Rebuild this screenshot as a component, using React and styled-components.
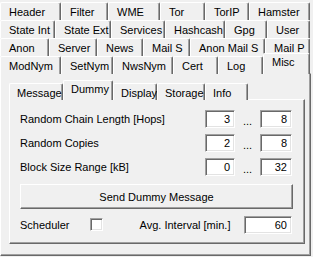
import React from "react";
import styled, { createGlobalStyle } from "styled-components";

const GlobalStyle = createGlobalStyle`
    html, body {
        margin: 0;
        padding: 0;
        background: #f0f0f0;
    }
    body {
        font-family: "Liberation Sans", Arial, sans-serif;
        font-size: 11px;
        color: #000;
    }
`;

const Window = styled.div`
    width: 313px;
    height: 257px;
    background: #f0f0f0;
    padding-top: 2px;
    box-sizing: border-box;
    overflow: hidden;
`;

const TabStrip = styled.div`
    display: flex;
    flex-direction: column;
    width: 310px;
`;

const TabRow = styled.div`
    display: flex;
    height: 18px;
    align-items: flex-end;
    margin-bottom: ${({ $last }) => ($last ? "-1px" : "0")};
`;

const Tab = styled.div`
    position: relative;
    box-sizing: border-box;
    width: ${({ $w }) => $w}px;
    height: ${({ $active, $h = 18 }) => ($active ? $h + 3 : $h)}px;
    margin-top: ${({ $active }) => ($active ? "-2px" : "0")};
    padding-left: ${({ $pad }) => $pad || 8}px;
    padding-top: ${({ $active }) => ($active ? "2px" : "3px")};
    border-top: 1px solid #fff;
    border-left: 1px solid #fff;
    border-right: 1px solid #696969;
    border-radius: 2px 2px 0 0;
    box-shadow: inset -1px 0 0 #a0a0a0;
    background: #f0f0f0;
    white-space: nowrap;
    z-index: ${({ $active }) => ($active ? 2 : 0)};
`;

const Panel = styled.div`
    box-sizing: border-box;
    width: 311px;
    height: 183px;
    border-top: 1px solid #fff;
    border-left: 1px solid #fff;
    border-right: 1px solid #696969;
    border-bottom: 1px solid #696969;
    box-shadow: inset -1px -1px 0 #a0a0a0;
    padding: 6px 0 0 8px;
`;

const InnerStrip = styled.div`
    display: flex;
    align-items: flex-end;
    height: 20px;
    margin-bottom: -1px;
`;

const InnerPanel = styled(Panel)`
    width: 296px;
    height: 145px;
    padding: 10px 12px 0 10px;
`;

const Grid = styled.div`
    display: grid;
    grid-template-columns: 185px 30px 25px 32px;
    grid-auto-rows: 18px;
    row-gap: 6px;
    align-items: center;
`;

const Label = styled.span`
    white-space: nowrap;
`;

const Dots = styled.span`
    text-align: center;
    padding-top: 3px;
`;

const Field = styled.div`
    box-sizing: border-box;
    height: 18px;
    width: ${({ $w }) => ($w ? `${$w}px` : "auto")};
    background: #fff;
    border-top: 1px solid #a0a0a0;
    border-left: 1px solid #a0a0a0;
    border-right: 1px solid #fff;
    border-bottom: 1px solid #fff;
    box-shadow: inset 1px 1px 0 #696969, inset -1px -1px 0 #e3e3e3;
    text-align: right;
    padding: 2px 4px 0 0;
`;

const Button = styled.div`
    box-sizing: border-box;
    margin-top: 8px;
    width: 273px;
    height: 25px;
    display: flex;
    align-items: center;
    justify-content: center;
    border-top: 1px solid #fff;
    border-left: 1px solid #fff;
    border-right: 1px solid #696969;
    border-bottom: 1px solid #696969;
    box-shadow: inset -1px -1px 0 #a0a0a0;
`;

const SchedRow = styled.div`
    display: flex;
    align-items: center;
    height: 19px;
    margin-top: 6px;
`;

const Check = styled.div`
    box-sizing: border-box;
    width: 13px;
    height: 13px;
    margin-left: 20px;
    margin-right: 37px;
    background: #fff;
    border-top: 1px solid #a0a0a0;
    border-left: 1px solid #a0a0a0;
    border-right: 1px solid #fff;
    border-bottom: 1px solid #fff;
    box-shadow: inset 1px 1px 0 #696969, inset -1px -1px 0 #e3e3e3;
`;

const Spacer = styled.div`
    flex: 1;
`;

const rows = [
    [["Header", 61], ["Filter", 47], ["WME", 52], ["Tor", 45], ["TorIP", 44], ["Hamster", 61]],
    [["State Int", 55], ["State Ext", 56], ["Services", 54], ["Hashcash", 60], ["Gpg", 42], ["User", 43]],
    [["Anon", 49], ["Server", 48], ["News", 46], ["Mail S", 47], ["Anon Mail S", 75], ["Mail P", 45]],
    [["ModNym", 61], ["SetNym", 52], ["NwsNym", 60], ["Cert", 45], ["Log", 45], ["Misc", 47]],
];

const innerTabs = [["Message", 54], ["Dummy", 50], ["Display", 44], ["Storage", 48], ["Info", 43]];

const ranges = [
    ["Random Chain Length [Hops]", "3", "8"],
    ["Random Copies", "2", "8"],
    ["Block Size Range [kB]", "0", "32"],
];

const App = () => (
    <Window>
        <GlobalStyle />
        <TabStrip>
            {rows.map((row, i) => (
                <TabRow key={i} $last={i === rows.length - 1}>
                    {row.map(([name, w]) => (
                        <Tab key={name} $w={w} $active={name === "Misc"}>{name}</Tab>
                    ))}
                </TabRow>
            ))}
        </TabStrip>
        <Panel>
            <InnerStrip>
                {innerTabs.map(([name, w]) => (
                    <Tab key={name} $w={w} $h={17} $pad={7} $active={name === "Dummy"}>{name}</Tab>
                ))}
            </InnerStrip>
            <InnerPanel>
                <Grid>
                    {ranges.map(([label, from, to]) => (
                        <React.Fragment key={label}>
                            <Label>{label}</Label>
                            <Field>{from}</Field>
                            <Dots>...</Dots>
                            <Field>{to}</Field>
                        </React.Fragment>
                    ))}
                </Grid>
                <Button>Send Dummy Message</Button>
                <SchedRow>
                    <Label>Scheduler</Label>
                    <Check />
                    <Label>Avg. Interval [min.]</Label>
                    <Spacer />
                    <Field $w={48}>60</Field>
                </SchedRow>
            </InnerPanel>
        </Panel>
    </Window>
);

export default App;
